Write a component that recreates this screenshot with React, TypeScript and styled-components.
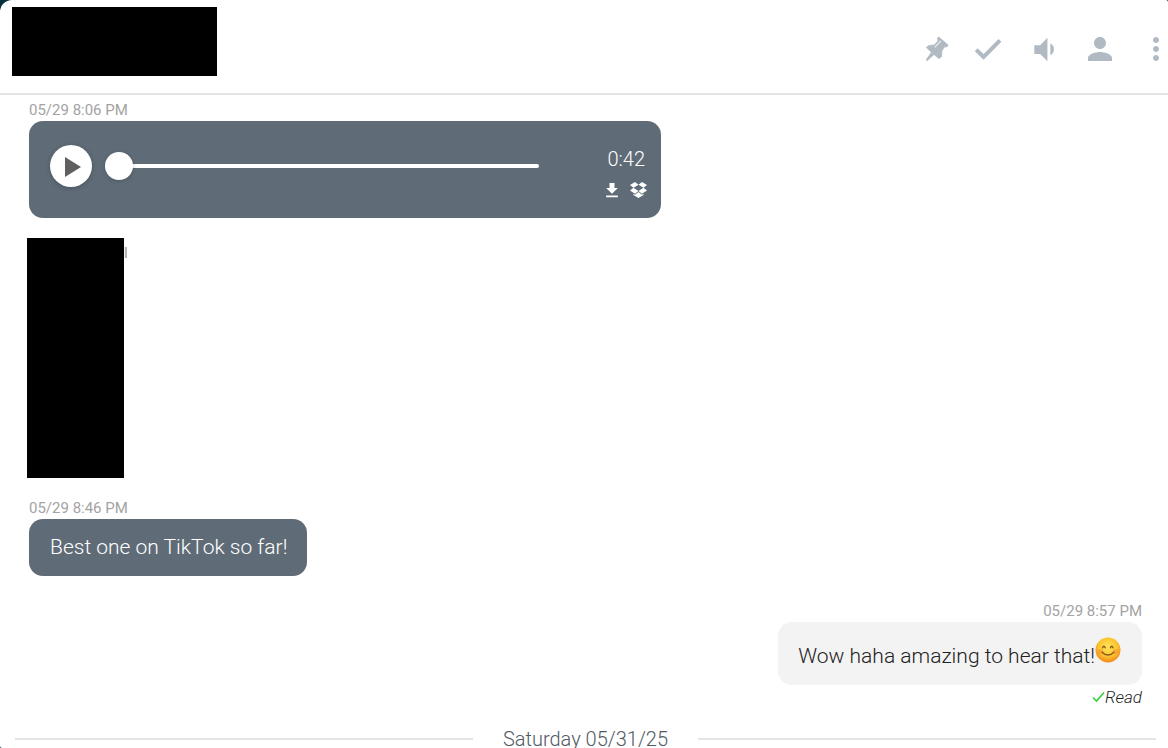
import React, { useState } from "react";
import styled, { createGlobalStyle } from "styled-components";
import { MdFileDownload, MdMoreVert, MdPerson, MdVolumeDown } from "react-icons/md";

const slate = "#5f6c77";

const GlobalStyle = createGlobalStyle`
  *, *::before, *::after { box-sizing: border-box; }
  html, body, #root { height: 100%; }
  body {
    margin: 0;
    overflow: hidden;
    background: #06303c;
    font-family: Roboto, "Liberation Sans", sans-serif;
    font-weight: 300;
  }
`;

const ChatPanel = styled.main`
  display: flex;
  flex-direction: column;
  height: 100vh;
  overflow: hidden;
  background: #fff;
  border-radius: 12px 2px 0 2px;
`;

const Header = styled.header`
  display: flex;
  flex: none;
  justify-content: space-between;
  align-items: flex-start;
  height: 95px;
  padding: 7px 0 0 12px;
  border-bottom: 2px solid #e3e4e5;
`;

const HiddenName = styled.div`
  width: 205px;
  height: 69px;
  background: #000;
`;

const Actions = styled.nav`
  display: flex;
  align-items: center;
  gap: 20px;
  padding-top: 24px;
  margin-right: -6px;
`;

const IconButton = styled.button<{ $size?: number; $color?: string }>`
  display: flex;
  align-items: center;
  justify-content: center;
  width: ${({ $size = 36 }) => $size}px;
  height: ${({ $size = 36 }) => $size}px;
  padding: 0;
  border: 0;
  background: none;
  color: ${({ $color = "#b1bac2" }) => $color};
  cursor: pointer;
`;

const Messages = styled.section`
  display: flex;
  flex: 1;
  flex-direction: column;
  min-height: 0;
  overflow: hidden;
  padding: 6px 26px 0 29px;
`;

const Message = styled.article<{ $mine?: boolean; $gap?: number }>`
  display: flex;
  flex: none;
  flex-direction: column;
  align-items: ${({ $mine }) => ($mine ? "flex-end" : "flex-start")};
  margin-bottom: ${({ $gap = 24 }) => $gap}px;
`;

const Timestamp = styled.time`
  height: 20px;
  font-size: 15px;
  font-weight: 400;
  line-height: 18px;
  color: #a3a3a3;
`;

const Bubble = styled.p<{ $mine?: boolean }>`
  display: flex;
  margin: 0;
  padding: ${({ $mine }) => ($mine ? "20px 21px 15px 20px" : "14px 20px 15px 21px")};
  border-radius: 14px;
  background: ${({ $mine }) => ($mine ? "#f3f3f3" : slate)};
  color: ${({ $mine }) => ($mine ? "#222" : "#fff")};
  font-size: 21px;
  line-height: 28px;
`;

const VoiceNote = styled.div`
  display: flex;
  align-items: flex-start;
  width: 632px;
  max-width: 100%;
  height: 97px;
  padding: 24px 13px 0 21px;
  border-radius: 14px;
  background: ${slate};
`;

const PlayButton = styled.button`
  display: flex;
  flex: none;
  align-items: center;
  justify-content: center;
  width: 42px;
  height: 42px;
  padding: 0;
  border: 0;
  border-radius: 50%;
  background: #fff;
  box-shadow: 0 1px 5px rgba(0, 0, 0, 0.25);
  cursor: pointer;
`;

const Seek = styled.input`
  flex: 1;
  min-width: 0;
  height: 42px;
  margin: 0 59px 0 13px;
  appearance: none;
  background: none;

  &::-webkit-slider-runnable-track {
    height: 4px;
    border-radius: 2px;
    background: #fff;
  }
  &::-webkit-slider-thumb {
    appearance: none;
    width: 28px;
    height: 28px;
    margin-top: -12px;
    border-radius: 50%;
    background: #fff;
    box-shadow: 0 1px 4px rgba(0, 0, 0, 0.2);
  }
`;

const NoteSide = styled.div`
  display: flex;
  flex: none;
  flex-direction: column;
  align-items: flex-end;
  width: 50px;
`;

const Duration = styled.span`
  padding: 1px 3px 0 0;
  font-size: 20px;
  line-height: 26px;
  color: #fff;
`;

const NoteActions = styled.div`
  display: flex;
  gap: 6px;
  padding-top: 8px;
`;

const HiddenContent = styled.div`
  display: flex;
  flex: none;
  width: 100px;
  height: 240px;
  margin: -4px 0 21px -2px;
`;

const HiddenBlock = styled.div`
  flex: none;
  width: 97px;
  background: #000;
`;

const TimestampEdge = styled.span`
  width: 3px;
  height: 11px;
  margin-top: 9px;
  border-right: 2px solid #b5b5b5;
  background: #eee;
`;

const Receipt = styled.span`
  display: flex;
  align-items: center;
  height: 24px;
  font-size: 17px;
  font-style: italic;
  line-height: 24px;
  color: #222;
`;

const DateDivider = styled.div`
  display: flex;
  flex: none;
  align-items: center;
  gap: 30px;
  margin: 0 -14px;
  font-size: 20px;
  line-height: 24px;
  color: #4f5a64;

  &::before, &::after {
    content: "";
    flex: 1;
    height: 2px;
    background: #e3e4e5;
  }
`;

const PinIcon = () => (
  <svg width="24" height="26" viewBox="0 0 24 26" aria-hidden="true">
    <path
      fill="currentColor"
      stroke="currentColor"
      strokeWidth=".6"
      strokeLinejoin="round"
      d="M13.6 .8 23.2 9 21.8 11 19.8 10.8 16.8 15 16.8 20.4 14 22.8 9 18.6 2.2 24.8 1 24 6.4 16.2 1.2 11.6 3.6 9.4 9.2 9 12.8 5 12.4 2.4Z"
    />
    <path d="M15.4 5.4 10.2 10.8" stroke="#fff" strokeWidth="1.6" strokeLinecap="round" opacity=".6" />
  </svg>
);

const CheckIcon = () => (
  <svg width="28" height="24" viewBox="0 0 28 24" aria-hidden="true">
    <path d="M2.2 12.8 9.6 20 26 3.4" fill="none" stroke="currentColor" strokeWidth="4" />
  </svg>
);

const DropboxIcon = () => (
  <svg width="17" height="16" viewBox="0 0 17 16" fill="currentColor" aria-hidden="true">
    <path d="M5 0 8.5 2.8 3.5 5.8 0 3.1ZM12 0 17 3.1 13.5 5.8 8.5 2.8ZM3.5 5.8 8.5 8.9 5 11.7 0 8.6ZM13.5 5.8 17 8.6 12 11.7 8.5 8.9ZM8.5 9.9 12 12.7 13.6 11.7V13L8.5 16 3.4 13V11.7L5 12.7Z" />
  </svg>
);

const SmileIcon = () => (
  <svg width="26" height="26" viewBox="0 0 26 26" role="img" aria-label="Smiling face">
    <defs>
      <radialGradient id="face" cx="50%" cy="38%" r="60%">
        <stop offset="0" stopColor="#ffe45c" />
        <stop offset=".6" stopColor="#fdc62f" />
        <stop offset="1" stopColor="#f08c1b" />
      </radialGradient>
    </defs>
    <circle cx="13" cy="13" r="12.5" fill="url(#face)" />
    <ellipse cx="5.5" cy="14.5" rx="3" ry="2.2" fill="#f98a35" opacity=".5" />
    <ellipse cx="20.5" cy="14.5" rx="3" ry="2.2" fill="#f98a35" opacity=".5" />
    <g fill="none" stroke="#8a5a1c" strokeWidth="1.4" strokeLinecap="round">
      <path d="M7.6 10.8Q8.9 7.8 10.2 10.8M15.4 10.8Q16.7 7.8 18 10.8" />
      <path d="M7 15.2Q13 21 19 15.2" />
    </g>
  </svg>
);

const Emoji = styled.span`
  display: flex;
  height: 26px;
  margin-top: -5px;
`;

export default function App() {
  const [position, setPosition] = useState(0);

  return (
    <>
      <GlobalStyle />
      <ChatPanel>
        <Header>
          <HiddenName />
          <Actions aria-label="Conversation actions">
            <IconButton $size={26} aria-label="Pin"><PinIcon /></IconButton>
            <IconButton aria-label="Mark done"><CheckIcon /></IconButton>
            <IconButton aria-label="Sound"><MdVolumeDown size={35} /></IconButton>
            <IconButton aria-label="Profile"><MdPerson size={36} /></IconButton>
            <IconButton aria-label="More"><MdMoreVert size={36} /></IconButton>
          </Actions>
        </Header>

        <Messages>
          <Message>
            <Timestamp>05/29 8:06 PM</Timestamp>
            <VoiceNote>
              <PlayButton aria-label="Play">
                <svg width="42" height="42" viewBox="0 0 42 42" aria-hidden="true">
                  <path d="M15 12V32L31 22Z" fill="#606060" />
                </svg>
              </PlayButton>
              <Seek
                type="range"
                aria-label="Playback position"
                min={0}
                max={42}
                value={position}
                onChange={(e) => setPosition(Number(e.target.value))}
              />
              <NoteSide>
                <Duration>0:42</Duration>
                <NoteActions>
                  <IconButton $size={20} $color="#fff" aria-label="Download"><MdFileDownload size={23} /></IconButton>
                  <IconButton $size={20} $color="#fff" aria-label="Save to Dropbox"><DropboxIcon /></IconButton>
                </NoteActions>
              </NoteSide>
            </VoiceNote>
          </Message>

          <HiddenContent>
            <HiddenBlock />
            <TimestampEdge />
          </HiddenContent>

          <Message $gap={26}>
            <Timestamp>05/29 8:46 PM</Timestamp>
            <Bubble>Best one on TikTok so far!</Bubble>
          </Message>

          <Message $mine $gap={18}>
            <Timestamp>05/29 8:57 PM</Timestamp>
            <Bubble $mine>
              Wow haha amazing to hear that!
              <Emoji><SmileIcon /></Emoji>
            </Bubble>
            <Receipt>
              <svg width="13" height="12" viewBox="0 0 13 12" aria-hidden="true">
                <path d="M1 6.5 4.5 10 12 1.5" fill="none" stroke="#35d23f" strokeWidth="1.7" />
              </svg>
              Read
            </Receipt>
          </Message>

          <DateDivider>Saturday 05/31/25</DateDivider>
        </Messages>
      </ChatPanel>
    </>
  );
}
